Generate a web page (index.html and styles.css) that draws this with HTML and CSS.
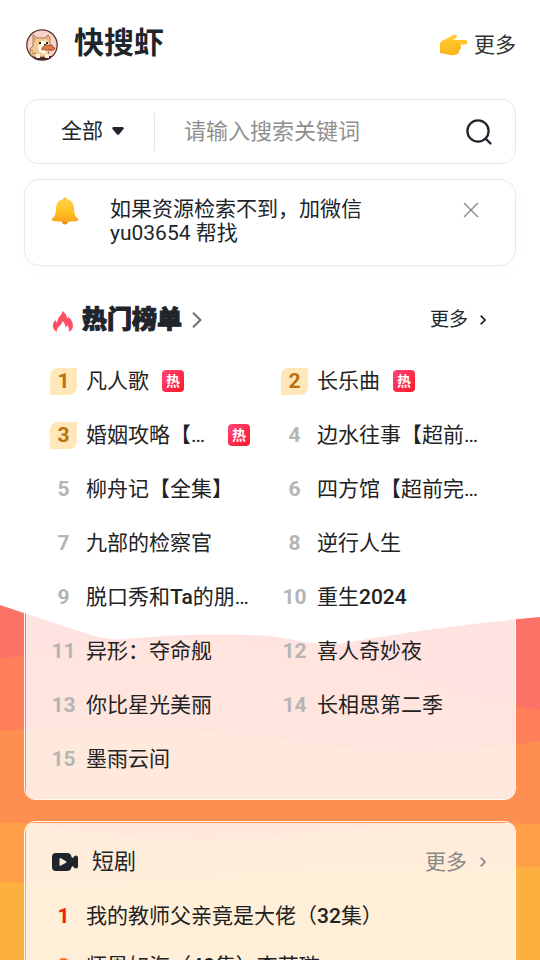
FILE: index.html
```html
<!DOCTYPE html>
<html lang="zh-CN">
<head>
<meta charset="utf-8">
<meta name="viewport" content="width=device-width, initial-scale=1">
<title>快搜虾</title>
<link rel="stylesheet" href="styles.css">
</head>
<body>
<div class="page">
  <svg class="waves" viewBox="0 0 540 400" preserveAspectRatio="none" aria-hidden="true">
    <path fill="#fd7267" d="M0 5L24 13L85 33Q108 41 125 39Q200 32 270 36L318 44Q334 46 350 42Q440 26 540 17V400H0Z"/>
    <path fill="#ff7f5a" d="M0 59Q50 50 100 44Q180 36 270 43L330 47Q390 72 450 90Q500 103 540 110V400H0Z"/>
    <path fill="#ff8f50" d="M0 131Q80 124 160 129Q220 131 290 141Q420 162 540 141V400H0Z"/>
    <path fill="#ff9f47" d="M0 223Q30 222 60 228Q160 244 270 237Q400 220 540 224V400H0Z"/>
    <path fill="#fcb040" d="M0 282Q100 283 190 279Q280 265 380 266Q460 265 540 267V400H0Z"/>
  </svg>

  <header class="top">
    <svg class="avatar" viewBox="0 0 32 32" aria-hidden="true">
      <circle cx="16" cy="16" r="15.2" fill="#f9d3ca" stroke="#5b3331" stroke-width="1.3"/>
      <path fill="#492820" d="M8 27h17v2l-4 2H12l-4-2z"/>
      <path fill="#f4cb8e" stroke="#6b3d2b" stroke-width=".6" d="M7 6l3 2 2 1h7l3-3 2 3v8l-1 4-1 7H8l-4-3v-5l3-3V6z"/>
      <path fill="#f2a177" d="M8 7l3 3-3 3zM20 9l2-2 1 5z"/>
      <path fill="#fff7e5" d="M15 12h6l3 4-3 2 1 4-4 3-5-2-1-5zM10 25h4v4h-4zM19 25h4v4h-4z"/>
      <path fill="#dc7a44" stroke="#823620" stroke-width=".7" d="M16 19l3-3h7l1 2 2 1-1 2h-2l-1 1-2-2-3 2-1-2-3 1z"/>
      <path fill="#30201f" d="M13 13h2v2h-2zM20 13h2v2h-2zM18 15h2v1h-2z"/>
      <path stroke="#b87352" d="M5 21l2 1M6 24l2 1M9 23v2" fill="none"/>
    </svg>
    <h1 class="brand">快搜虾</h1>
    <a class="top-more" href="#">
      <svg class="hand" viewBox="0 0 28 22" aria-hidden="true">
        <defs><linearGradient id="handFill" x1="0" y1="0" x2="0" y2="1"><stop offset="0" stop-color="#ffcf33"/><stop offset="1" stop-color="#fcb51c"/></linearGradient></defs>
        <path fill="url(#handFill)" d="M0 9Q2 6 6 5L13 1Q16 0 17 2Q17 4 13 6H25Q27.500 6 27.500 8.200Q27.500 10.500 25 10.500H20Q22 12 20.500 14Q21 16 19 17Q19 20 16.500 20.500Q12 22 8 20.500L0 19Z"/>
        <path d="M14 10.500h6M15 14h5M15 17h4" stroke="#f0a31a" stroke-width=".6" fill="none"/>
      </svg>
      <span>更多</span>
    </a>
  </header>

  <main class="content">
    <form class="search">
      <button class="scope" type="button">全部
        <svg class="caret" viewBox="0 0 12 8" aria-hidden="true"><path fill="#20252c" d="M1.500 0h9Q12.500 .5 11.500 2L7.200 7.200Q6 8.400 4.800 7.200L.5 2Q-.5 .5 1.500 0Z"/></svg>
      </button>
      <input class="query" type="text" aria-label="搜索关键词" placeholder="请输入搜索关键词">
      <button class="go" type="submit" aria-label="搜索">
        <svg viewBox="0 0 28 28" fill="none" stroke="#20252c" stroke-width="2.300" stroke-linecap="round" aria-hidden="true"><circle cx="13" cy="13" r="10.600"/><path d="M20.600 20.600L25.500 25.500"/></svg>
      </button>
    </form>

    <section class="notice">
      <svg class="bell" viewBox="0 0 28 28" aria-hidden="true">
        <defs><linearGradient id="bellFill" x1="0" y1="0" x2="0" y2="1"><stop offset="0" stop-color="#ffd04a"/><stop offset=".6" stop-color="#ffc021"/><stop offset="1" stop-color="#f9a11b"/></linearGradient></defs>
        <circle cx="14" cy="2.500" r="2" fill="#f6b12b"/>
        <path fill="#f08c14" d="M11 23h6v2q-.5 2.500-3 2.500T11 25z"/>
        <path fill="url(#bellFill)" d="M14 2C20 2 22.500 5.500 23 11C23.300 17 24 19.500 27 21.500Q28 22.500 26.500 24Q14 25.500 1.500 24Q0 22.500 1 21.500C4 19.500 4.700 17 5 11C5.500 5.500 8 2 14 2Z"/>
      </svg>
      <p class="notice-text">如果资源检索不到，加微信 yu03654 帮找</p>
      <button class="close" type="button" aria-label="关闭">
        <svg viewBox="0 0 16 16" stroke="#8b8b8b" stroke-width="1.400" aria-hidden="true"><path d="M1 1l14 14M15 1L1 15"/></svg>
      </button>
    </section>

    <section class="card hot">
      <div class="card-head">
        <svg class="flame" viewBox="0 0 22 22" aria-hidden="true"><path fill="#fb4f66" d="M5 21Q0 18 1 13Q1.500 11 3.500 9Q4 11 5 11.500Q5 8 8 5Q10 3 10.500 0Q15 3 15 8Q16 7 16 5.500Q21 10 21 14.500Q21 19 16.500 21Q18 17 15 14Q14.500 16 13.500 16.500Q13 12 10.500 10Q10 13 7.500 15Q4 18 5 21Z"/></svg>
        <h2 class="hot-title">热门榜单</h2>
        <svg class="title-arrow" viewBox="0 0 10 16" fill="none" stroke="#707070" stroke-width="2" aria-hidden="true"><path d="M1 .7L8.500 8 1 15.300"/></svg>
        <a class="more dark" href="#">更多
          <svg viewBox="0 0 6 10" fill="none" stroke="currentColor" stroke-width="1.700" aria-hidden="true"><path d="M.7.7L5 5 .7 9.300"/></svg>
        </a>
      </div>
      <ol class="ranks two">
        <li><b class="num medal">1</b><a href="#">凡人歌</a><span class="tag">热</span></li>
        <li><b class="num medal">2</b><a href="#">长乐曲</a><span class="tag">热</span></li>
        <li><b class="num medal">3</b><a href="#">婚姻攻略【全集】</a><span class="tag">热</span></li>
        <li><b class="num">4</b><a href="#">边水往事【超前完结】</a></li>
        <li><b class="num">5</b><a href="#">柳舟记【全集】</a></li>
        <li><b class="num">6</b><a href="#">四方馆【超前完结】</a></li>
        <li><b class="num">7</b><a href="#">九部的检察官</a></li>
        <li><b class="num">8</b><a href="#">逆行人生</a></li>
        <li><b class="num">9</b><a href="#">脱口秀和<span class="latin">Ta</span>的朋友们</a></li>
        <li><b class="num">10</b><a href="#">重生<span class="latin">2024</span></a></li>
        <li><b class="num">11</b><a href="#">异形：夺命舰</a></li>
        <li><b class="num">12</b><a href="#">喜人奇妙夜</a></li>
        <li><b class="num">13</b><a href="#">你比星光美丽</a></li>
        <li><b class="num">14</b><a href="#">长相思第二季</a></li>
        <li><b class="num">15</b><a href="#">墨雨云间</a></li>
      </ol>
    </section>

    <section class="card shorts">
      <div class="card-head">
        <svg class="camera" viewBox="0 0 26 20" aria-hidden="true"><path fill="#20252c" fill-rule="evenodd" d="M4 1H15Q19 1 19.500 5L21 6Q22 3.500 24 3.500Q26 3.500 26 5.500V14.500Q26 16.500 24 16.500Q22 16.500 21 14L19.500 15Q19 19 15 19H4Q0 19 0 15V5Q0 1 4 1ZM8.500 6Q7.500 6 7.500 7V13Q7.500 14 8.500 13.700L14 10.700Q15 10 14 9.300Z"/></svg>
        <h2 class="shorts-title">短剧</h2>
        <a class="more" href="#">更多
          <svg viewBox="0 0 6 10" fill="none" stroke="currentColor" stroke-width="1.700" aria-hidden="true"><path d="M.7.7L5 5 .7 9.300"/></svg>
        </a>
      </div>
      <ol class="ranks">
        <li><b class="num first">1</b><a href="#">我的教师父亲竟是大佬（<span class="latin">32</span>集）</a></li>
        <li><b class="num second">2</b><a href="#">师恩如海（<span class="latin">48</span>集）李若璇</a></li>
      </ol>
    </section>
  </main>
</div>
</body>
</html>
```
FILE: styles.css
```css
* { box-sizing: border-box; }
body {
  margin: 0;
  background: #fff;
  color: #20252c;
  font-family: Roboto, "Noto Sans CJK SC", sans-serif;
  font-size: 21px;
  line-height: 24px;
}
h1, h2, p, ol { margin: 0; padding: 0; }
a { color: inherit; text-decoration: none; }
button, input { border: 0; padding: 0; background: none; color: inherit; font: inherit; }
svg { display: block; flex: none; }

.page { position: relative; height: 100vh; overflow: hidden; }
.waves { position: absolute; left: 0; top: 600px; width: 100%; height: 400px; }

.top { display: flex; align-items: center; height: 90px; padding: 0 24px 0 26px; }
.avatar { width: 32px; height: 32px; }
.brand { margin-left: 16px; padding-bottom: 4px; font-size: 30px; line-height: 40px; font-weight: 700; }
.top-more { display: flex; align-items: center; gap: 6px; margin-left: auto; color: #333; }
.hand { width: 28px; height: 22px; }

.content { position: relative; padding: 9px 24px 0; }

.search, .notice { display: flex; border: 1px solid #e8e8e8; border-radius: 14px; background: #fff; }
.search { align-items: center; height: 65px; padding-right: 22px; }
.scope { display: flex; align-items: center; justify-content: center; gap: 9px; width: 130px; height: 38px; padding: 0 0 2px 6px; border-right: 1px solid #e5e5e5; }
.caret { width: 12px; height: 8px; }
.query { flex: 1; min-width: 0; padding-left: 29px; font-size: 22px; outline: 0; }
.query::placeholder { color: #8f8f8f; opacity: 1; }
.go svg { width: 28px; height: 28px; }

.notice { align-items: flex-start; min-height: 87px; margin-top: 15px; padding: 17px 36px 17px 26px; border-radius: 16px; box-shadow: 0 4px 20px rgba(0, 0, 0, .02); }
.bell { width: 28px; height: 28px; }
.notice-text { width: 270px; margin-left: 31px; }
.close { margin: 5px 0 0 auto; }
.close svg { width: 16px; height: 16px; }

.card {
  border: 1px solid rgba(255, 255, 255, .95);
  border-radius: 12px;
  background: linear-gradient(rgba(255, 255, 255, .8), rgba(255, 255, 255, .8)) 1px 1px no-repeat;
  background-clip: padding-box;
  padding: 0 24px;
}
.hot { margin-top: 23px; padding-bottom: 13px; }
.shorts { margin-top: 21px; }
.card-head { display: flex; align-items: center; padding: 0 5px 0 3px; }
.hot .card-head { height: 60px; margin-bottom: 4px; }
.shorts .card-head { height: 80px; margin-bottom: -11px; }
.flame { width: 22px; height: 22px; margin-top: 3px; }
.hot-title { margin-left: 8px; font-size: 25px; line-height: 30px; font-weight: 900; -webkit-text-stroke: 1px currentColor; }
.title-arrow { width: 10px; height: 16px; margin-left: 10px; }
.more { display: flex; align-items: center; gap: 13px; margin-left: auto; color: #888; }
.more.dark { gap: 12px; color: #20252c; font-size: 19px; }
.more svg { width: 6px; height: 10px; }
.camera { width: 26px; height: 20px; }
.shorts-title { margin-left: 14px; font-size: 22px; font-weight: 400; }

.ranks { list-style: none; }
.two { display: grid; grid-template-columns: repeat(2, minmax(0, 1fr)); column-gap: 20px; }
.ranks li { display: flex; align-items: center; height: 50px; padding-left: 1px; color: #222; }
.ranks.two li { height: 54px; padding-right: 10px; }
.ranks a { min-width: 0; overflow: hidden; line-height: 27px; white-space: nowrap; text-overflow: ellipsis; }
.latin { font-weight: 500; }
.num { flex: none; width: 27px; height: 27px; margin-right: 9px; color: #b5b5b5; font-weight: 700; line-height: 27px; text-align: center; }
.medal { border-radius: 8px 0 8px 0; background: #ffe7b9; color: #b9720b; }
.first { color: #ee220c; }
.second { color: #ff6a22; }
.tag { flex: none; width: 22px; height: 22px; margin-left: 13px; border-radius: 4px; background: linear-gradient(135deg, #ff4778, #fb1728); color: #fff; font-size: 14px; line-height: 22px; font-weight: 700; text-align: center; }
```
